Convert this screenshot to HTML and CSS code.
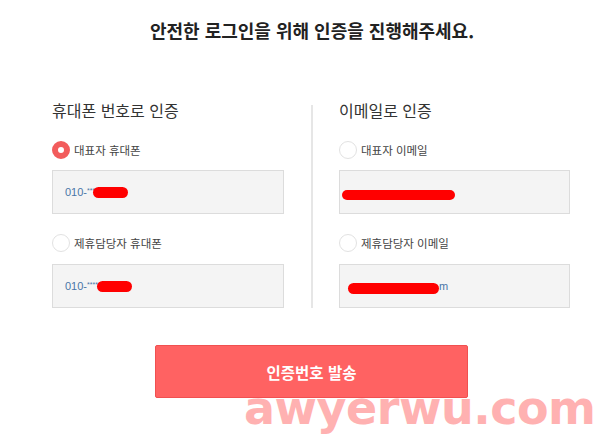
FILE: index.html
```html
<!DOCTYPE html>
<html lang="ko">
<head>
<meta charset="utf-8">
<link rel="stylesheet" href="styles.css">
</head>
<body>
<div class="page">
  <h1 class="title">안전한 로그인을 위해 인증을 진행해주세요.</h1>
  <div class="cols">
    <section class="col">
      <h2 class="col-title">휴대폰 번호로 인증</h2>
      <label class="radio"><span class="dot on"></span>대표자 휴대폰</label>
      <div class="field"><span class="num">010-<span class="stars">***</span></span><span class="blob b1"></span></div>
      <label class="radio r2"><span class="dot"></span>제휴담당자 휴대폰</label>
      <div class="field f2"><span class="num">010-<span class="stars">****</span></span><span class="blob b2"></span></div>
    </section>
    <div class="divider"></div>
    <section class="col">
      <h2 class="col-title">이메일로 인증</h2>
      <label class="radio"><span class="dot"></span>대표자 이메일</label>
      <div class="field"><span class="blob b3"></span></div>
      <label class="radio r2"><span class="dot"></span>제휴담당자 이메일</label>
      <div class="field f2"><span class="blob b4"></span><span class="num">m</span></div>
    </section>
  </div>
  <div class="actions"><button class="send">인증번호 발송</button></div>
  <div class="watermark">awyerwu.com</div>
</div>
</body>
</html>
```

FILE: styles.css
```css
* { box-sizing: border-box; }
html, body { margin: 0; padding: 0; background: #fff; }
body { font-family: "Noto Sans CJK KR", "Noto Sans", sans-serif; color: #333; }
.page { position: relative; width: 604px; height: 444px; overflow: hidden; padding-top: 18px; }
.title { margin: 0 0 0 20px; font-size: 18px; line-height: 24px; font-weight: 700; color: #222; text-align: center; letter-spacing: 0; }
.cols { display: grid; grid-template-columns: 232px 1px 231px; column-gap: 27px; padding-left: 52px; margin-top: 58px; }
.cols .divider { background: #e6e6e6; width: 2px; margin-top: 5px; }
.col { display: flex; flex-direction: column; }
.col-title { margin: 0; font-size: 16px; line-height: 20px; font-weight: 400; color: #333; }
.radio { display: flex; align-items: center; gap: 4px; height: 18px; margin-top: 21px; font-size: 11.5px; color: #444; }
.radio.r2 { margin-top: 20px; }
.dot { width: 18px; height: 18px; border-radius: 50%; border: 1px solid #e2e2e2; background: #fff; flex: none; }
.dot.on { border: 6px solid #f25c5c; }
.field { display: flex; align-items: center; height: 44px; margin-top: 11px; padding-left: 12px; background: #f4f4f4; border: 1px solid #dcdcdc; }
.field.f2 { margin-top: 12px; }
.num { font-size: 11px; color: #4a76a8; font-family: "Liberation Sans", Arial, sans-serif; }
.stars { font-size: 7px; vertical-align: 3px; }
.blob { display: inline-block; background: #ff0000; border-radius: 6px; }
.b1 { width: 35px; height: 11px; margin-left: -2px; }
.b2 { width: 35px; height: 11px; margin-left: -1px; }
.b3 { width: 113px; height: 10px; margin-left: -10px; margin-top: 6px; }
.b4 { width: 91px; height: 11px; margin-left: -4px; margin-top: 4px; }
.actions { display: flex; padding-left: 155px; margin-top: 37px; }
.send { width: 313px; height: 53px; border: 1px solid #f05050; border-radius: 2px; background: #ff6262; color: #fff; font-family: "Noto Sans CJK KR", sans-serif; font-size: 15.5px; font-weight: 700; }
.watermark { position: absolute; left: 244px; top: 380px; font-family: "DejaVu Sans", sans-serif; font-weight: 700; font-size: 46px; line-height: 56px; color: #ffb1b1; letter-spacing: -0.5px; }
```
